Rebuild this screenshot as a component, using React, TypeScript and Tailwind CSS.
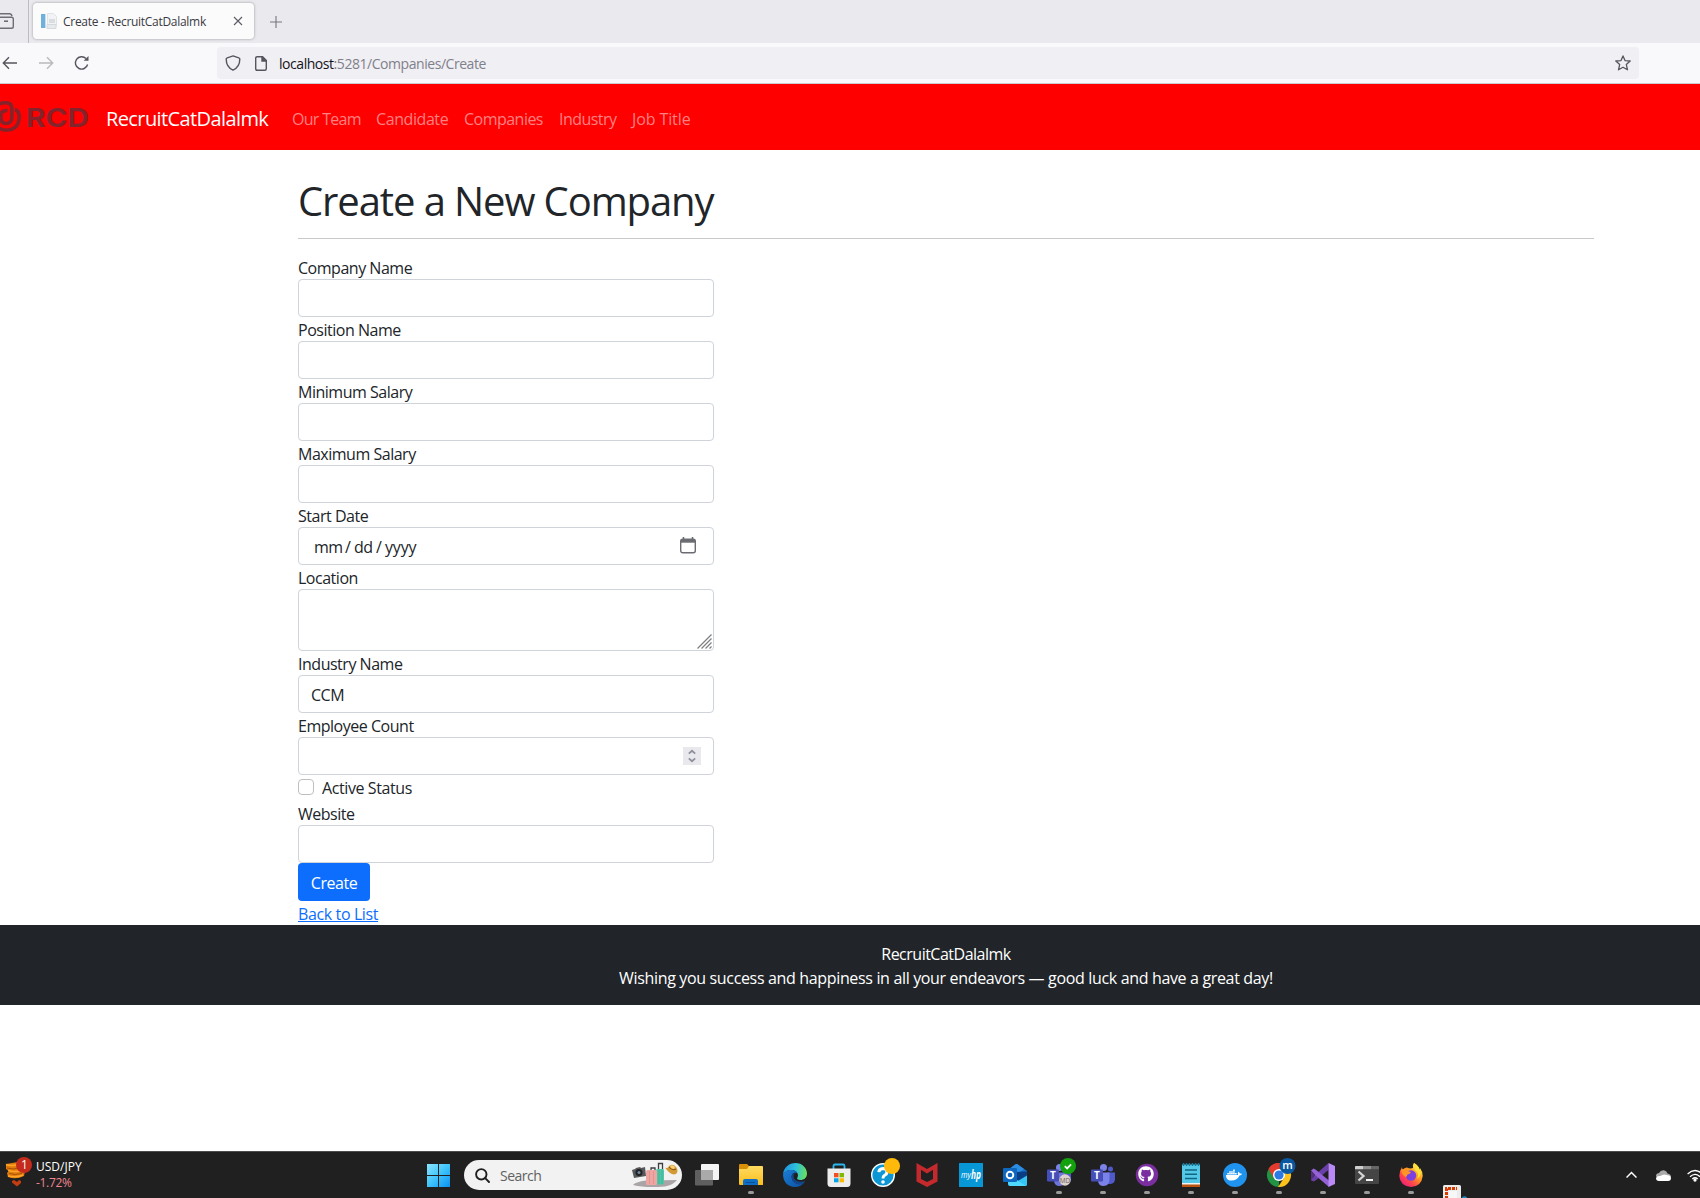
import type { ReactNode } from 'react';
import { FaDocker, FaGithub } from 'react-icons/fa';

/* ---------- Browser chrome ---------- */

function TabStrip() {
  return (
    <div className="flex h-[43px] bg-[#eae9ed]">
      <div className="flex w-[29px] shrink-0 items-center border-r border-[#bdbcc2]">
        <svg width="14" height="18" viewBox="0 0 14 18" fill="none" stroke="#6f6e76" strokeWidth="1.4" className="mb-px">
          <path d="M-2 1.7H9.5Q11.5 1.7 12 4.2M-3 5.2H11.5Q13.3 5.2 13.3 7V14.5Q13.3 16.3 11.5 16.3H-3" />
          <path d="M4 9.2H8" strokeWidth="1.6" />
        </svg>
      </div>
      <div className="ml-1 mt-[3px] flex h-9 w-[221px] items-center rounded bg-[#fbfbfc] pl-2 shadow-[0_0_3px_rgba(0,0,0,0.35)]">
        <svg width="16" height="17" viewBox="0 0 16 17" className="shrink-0">
          <rect x="0" y="1" width="4" height="14" fill="#6fb1dc" />
          <rect x="4" y="1" width="1" height="14" fill="#c6dfef" />
          <path d="M6.500.5h6l3 3v9h-9z" fill="#f1f3f5" stroke="#dfe3e6" />
          <path d="M8 7h6M8 9h6M7 12h8" stroke="#c3c8cc" />
          <path d="M6 11.500h9v4H6z" fill="#e7eaec" stroke="#d5d9dc" />
        </svg>
        <span className="ml-1.5 flex-1 whitespace-nowrap pt-0.5 text-xs tracking-[-0.29px] text-[#3a3a42]">Create - RecruitCatDalalmk</span>
        <svg width="10" height="10" viewBox="0 0 10 10" stroke="#5b5b66" strokeWidth="1.1" className="mr-[11px]">
          <path d="M1 1l8 8M9 1l-8 8" />
        </svg>
      </div>
      <svg width="12" height="12" viewBox="0 0 12 12" stroke="#77767e" strokeWidth="1.1" className="ml-4 mt-4">
        <path d="M6 0v12M0 6h12" />
      </svg>
    </div>
  );
}

function Toolbar() {
  return (
    <div className="flex h-[41px] items-center border-b border-[#cccccf] bg-[#f9f9fb]">
      <svg width="16" height="14" viewBox="0 0 16 14" fill="none" stroke="#56555e" strokeWidth="1.4" className="ml-[2px] shrink-0">
        <path d="M15 7H1.500M7 1.200L1.300 7L7 12.800" />
      </svg>
      <svg width="16" height="14" viewBox="0 0 16 14" fill="none" stroke="#b9b9be" strokeWidth="1.4" className="ml-[20px] shrink-0">
        <path d="M1 7h13.500M9 1.200L14.700 7L9 12.800" />
      </svg>
      <svg width="16" height="16" viewBox="0 0 16 16" fill="none" stroke="#56555e" strokeWidth="1.4" className="ml-5 shrink-0">
        <path d="M13.600 9.500A6.200 6.200 0 1 1 12 3.500" />
        <path d="M14.500 1v4.800H9.700z" fill="#56555e" stroke="none" />
      </svg>
      <div className="ml-[127px] flex h-8 w-[1422px] items-center rounded bg-[#f0eff4] pl-2">
        <svg width="16" height="16" viewBox="0 0 16 16" fill="none" stroke="#56555e" strokeWidth="1.4" className="mb-px shrink-0">
          <path d="M8 .9l5.800 2c.7.2 1 .5 1 1.200C14.800 9 13 13 8 15.200C3 13 1.200 9 1.200 4.100c0-.7.300-1 1-1.200z" />
        </svg>
        <svg width="12" height="15" viewBox="0 0 12 15" fill="none" stroke="#56555e" strokeWidth="1.4" className="ml-[14px] shrink-0">
          <path d="M2.200.7h5.300l3.800 3.800v8.300q0 1.500-1.500 1.500H2.200Q.7 14.300.7 12.800V2.200Q.7.7 2.200.7z" />
          <path d="M7 .5v4.500h4.500z" fill="#56555e" />
        </svg>
        <span className="ml-3 flex-1 whitespace-nowrap pt-0.5 text-sm tracking-[-0.45px] text-[#80808a]">
          <span className="text-[#15141a]">localhost</span>:5281/Companies/Create
        </span>
        <svg width="16" height="16" viewBox="0 0 16 16" fill="none" stroke="#56555e" strokeWidth="1.300" strokeLinejoin="round" className="mr-2">
          <path d="M8 .9l2 4.700 5.200.4-3.900 3.400 1.200 5.400L8 12.200l-4.500 2.600 1.200-5.400L.8 6l5.200-.4z" />
        </svg>
      </div>
    </div>
  );
}

/* ---------- Web page ---------- */

function Logo() {
  return (
    <svg width="90" height="34" viewBox="0 0 90 34" className="shrink-0">
      <g fill="none" stroke="#85222a" strokeWidth="3.600">
        <path d="M-2 4.500Q3 2 8 3Q11.800 3.800 11.800 8V17.500Q11.500 23.500 6 23.500Q1 23.500 1 18V15Q1 10.500 7.500 10.500" />
        <path d="M14.800 9.500Q19.200 10.500 19.200 17.500Q18.500 30 6 30.200Q1 30.200-3 27" />
      </g>
      <text x="26" y="26.500" fontFamily="Inter" fontWeight="700" fontSize="25" textLength="63" lengthAdjust="spacingAndGlyphs" fill="#85222a">RCD</text>
    </svg>
  );
}

function Navbar() {
  return (
    <nav className="flex h-[66px] items-center bg-[#ff0000] text-[#ff8080]">
      <Logo />
      <span className="ml-4 w-[179px] whitespace-nowrap pt-[3px] text-xl tracking-[-0.6px] text-white">RecruitCatDalalmk</span>
      <div className="ml-[7px] flex gap-4 whitespace-nowrap pt-[3px]">
        <a className="w-[68px] tracking-[-0.7px]">Our Team</a>
        <a className="w-[72px] tracking-[-0.42px]">Candidate</a>
        <a className="w-[79px] tracking-[-0.52px]">Companies</a>
        <a className="w-[57px] tracking-[-0.55px]">Industry</a>
        <a className="tracking-[-0.1px]">Job Title</a>
      </div>
    </nav>
  );
}

function Box({ tall, children }: { tall?: boolean; children?: ReactNode }) {
  return (
    <div className={`relative flex w-[416px] rounded border border-[#ced4da] bg-white ${tall ? 'h-[62px]' : 'h-[38px]'}`}>
      {children}
    </div>
  );
}

function Field({ label, tall, children }: { label: string; tall?: boolean; children?: ReactNode }) {
  return (
    <div>
      <div className="h-6 pt-px leading-6">{label}</div>
      <Box tall={tall}>{children}</Box>
    </div>
  );
}

function CompanyForm() {
  return (
    <main className="ml-[298px] w-[1296px] pt-8 tracking-[-0.48px] text-[#212529]">
      <h1 className="mb-[13px] mt-[-5px] h-12 text-[40px] leading-[48px] tracking-[-1.1px]">Create a New Company</h1>
      <hr className="mb-4 border-[#c8c9ca]" />
      <Field label="Company Name" />
      <Field label="Position Name" />
      <Field label="Minimum Salary" />
      <Field label="Maximum Salary" />
      <Field label="Start Date">
        <div className="flex flex-1 items-start justify-between pl-[15px] pr-[17px]">
          <span className="flex pt-[7px] leading-6">
            <span className="w-[31px]">mm</span>
            <span className="w-[9px]">/</span>
            <span className="w-[22px]">dd</span>
            <span className="w-[9px]">/</span>
            <span className="tracking-[-0.2px]">yyyy</span>
          </span>
          <svg width="16" height="17" viewBox="0 0 16 17" className="mt-[9px]">
            <path d="M3.500 0v3M12.500 0v3" stroke="#6b6c72" strokeWidth="1.600" />
            <rect x=".7" y="2.200" width="14.600" height="13.600" rx="2" fill="none" stroke="#6b6c72" strokeWidth="1.400" />
            <path d="M1 2.500h14v3.200H1z" fill="#6b6c72" />
          </svg>
        </div>
      </Field>
      <Field label="Location" tall>
        <svg width="15" height="15" viewBox="0 0 15 15" stroke="#7d7d7d" strokeWidth="1.200" className="absolute bottom-[1px] right-[1px]">
          <path d="M.5 14.500l14-14M4.500 14.500l10-10M8.500 14.500l6-6M12.500 14.500l2-2" />
        </svg>
      </Field>
      <Field label="Industry Name">
        <span className="pl-3 pt-[7px] leading-6 tracking-[-0.5px]">CCM</span>
      </Field>
      <Field label="Employee Count">
        <svg width="18" height="18" viewBox="0 0 18 18" fill="none" stroke="#8f8f9d" strokeWidth="1.800" className="ml-auto mr-3 mt-[9px] bg-[#e9e9ed]">
          <path d="M5.800 6.600L9 3.800l3.200 2.800M5.800 11.400L9 14.200l3.200-2.800" />
        </svg>
      </Field>
      <div className="flex h-[26px]">
        <span className="mt-1 size-4 rounded border border-[#bfbfbf]" />
        <span className="ml-2 pt-px leading-6 tracking-[-0.4px]">Active Status</span>
      </div>
      <Field label="Website" />
      <button className="flex h-[38px] w-[72px] justify-center rounded bg-[#0d6efd] pt-2 leading-6 text-white">Create</button>
      <a className="flex h-6 pt-px leading-6 tracking-[-0.38px] text-[#0d6efd] underline">Back to List</a>
    </main>
  );
}

/* ---------- Taskbar ---------- */

function TaskIcon({ running, children }: { running?: boolean; children: ReactNode }) {
  return (
    <div className="flex w-11 shrink-0 flex-col items-center">
      <svg width="24" height="24" viewBox="0 0 24 24" className="mt-[11px] overflow-visible">
        {children}
      </svg>
      {running && <span className="mt-1 h-[3px] w-1.5 rounded-full bg-[#9a9a9a]" />}
    </div>
  );
}

function TeamsShape({ muted }: { muted?: boolean }) {
  return (
    <>
      <circle cx="12.500" cy="4.500" r="3.500" fill="#7b83eb" />
      <circle cx="19.500" cy="6" r="2.500" fill="#5059c9" />
      <path d="M16 9.500h8v7q-.5 4-4.500 4.500H16z" fill="#5059c9" />
      <path d="M7 9.500h11.500v7q0 6-6 6.500q-5 0-5.500-5z" fill={muted ? '#6d75d8' : '#7b83eb'} />
      <rect x="0" y="6.500" width="12" height="12" rx="1" fill="#464eb8" />
      <text x="6" y="16" fontSize="10" fontWeight="700" textAnchor="middle" fill="#fff">T</text>
    </>
  );
}

function Luggage() {
  return (
    <svg width="47" height="26" viewBox="0 0 47 26" className="shrink-0">
      <path d="M2 23Q4 20 15 18.500L46 18Q42 23 34 24.500Q14 26 2 23z" fill="#aaa4a6" />
      <path d="M1 8l3-1 1-1 4-1 1 1 4-1 1 9-12 2z" fill="#57585b" />
      <circle cx="8" cy="10.500" r="3.500" fill="#222" />
      <circle cx="8" cy="10.500" r="1.500" fill="#6d87a0" />
      <path d="M27.500 8V1.500h4V8M20 11V6h4v5" fill="none" stroke="#3c3f42" strokeWidth="1.300" />
      <rect x="25" y="7" width="8" height="15.500" rx="1.500" fill="#53c6a8" />
      <path d="M28 8v14M31 8v14" stroke="#43b295" />
      <rect x="15" y="8" width="11" height="15" rx="1.500" fill="#efa5a2" />
      <path d="M18.500 9v13M22.500 9v13" stroke="#e39390" />
      <path d="M34 5.500Q37 7 38 4Q42 1 45 5Q48 9 45 12Q40 14 34 5.500z" fill="#d39a35" />
      <path d="M38 5Q41 9 45 7" fill="none" stroke="#8c5a15" strokeWidth="1.200" />
      <path d="M39 4Q42 2 44 5L43 7Q40 7 39 4z" fill="#f6cf77" />
    </svg>
  );
}

function Taskbar() {
  return (
    <div className="flex h-[47px] overflow-hidden border-t border-[#4c4c4c] bg-[#202020]">
      <div className="flex w-[427px] shrink-0 pt-[4px]">
        <svg width="34" height="34" viewBox="0 0 34 34" className="shrink-0">
          <path d="M6 8l12-2 2 3 5 6-1 5q-8 4-16 1l-1-4 2-2-3-2z" fill="#e07c0c" />
          <path d="M6 8.500q6 2 12 0M8 14.500q7 2 14 0M8 20q8 2 15-1" fill="none" stroke="#ffa52a" strokeWidth="1.600" />
          <path d="M7 12q6 2 12 0M9 17.500q6 2 13 0" fill="none" stroke="#a95106" />
          <path d="M12 25l2-1 3 2 2-2 2 1v2l-4 3.500-5-4z" fill="#c53c13" />
          <circle cx="24" cy="9" r="8" fill="#c42b1c" />
          <text x="24.500" y="13.300" fontSize="12" textAnchor="middle" fill="#fff">1</text>
        </svg>
        <div className="ml-0.5 pt-[3px] text-xs leading-4">
          <div className="tracking-[0px] text-white">USD/JPY</div>
          <div className="tracking-[-0.3px] text-[#f0868f]">-1.72%</div>
        </div>
      </div>
      <svg width="23" height="23" viewBox="0 0 23 23" className="mt-3 shrink-0">
        <defs>
          <linearGradient id="win" x1="0" y1="0" x2="23" y2="23" gradientUnits="userSpaceOnUse">
            <stop stopColor="#8be4ff" />
            <stop offset=".5" stopColor="#3fc4fb" />
            <stop offset="1" stopColor="#0a92f4" />
          </linearGradient>
        </defs>
        <path d="M0 0h11v11H0zM12 0h11v11H12zM0 12h11v11H0zM12 12h11v11H12z" fill="url(#win)" />
      </svg>
      <div className="ml-[14px] mt-2 flex h-[30px] w-[218px] shrink-0 items-center rounded-full bg-[#f2f2f2] pl-[11px]">
        <svg width="15" height="15" viewBox="0 0 15 15" fill="none" stroke="#1f1f1f" strokeWidth="1.900" strokeLinecap="round">
          <circle cx="6.300" cy="6.300" r="5.200" />
          <path d="M10.200 10.200l3.800 3.800" />
        </svg>
        <span className="ml-[10px] flex-1 pt-px text-sm tracking-[-0.5px] text-[#606060]">Search</span>
        <div className="mr-1"><Luggage /></div>
      </div>
      <div className="ml-[3px] flex shrink-0">
        <TaskIcon>
          <rect x="6" y="1" width="18" height="16" rx="1" fill="#f4f4f4" />
          <rect x="0" y="7" width="18" height="15.500" rx="1" fill="#6b6b6b" fillOpacity=".85" />
          <path d="M6 7h12v10H6z" fill="#aaa" />
        </TaskIcon>
        <TaskIcon running>
          <path d="M0 2q0-1 1-1h7l2 2v4H0z" fill="#d98f06" />
          <path d="M0 6h8l2-3h13q1 0 1 1v17.500q0 .5-1 .5H1q-1 0-1-1z" fill="url(#folder)" />
          <defs><linearGradient id="folder" x2="0" y2="1"><stop stopColor="#ffdc60" /><stop offset="1" stopColor="#f9bd1f" /></linearGradient></defs>
          <path d="M4 22v-4q0-2 2-2h11q2 0 2 2v4z" fill="#0f6fc4" />
          <path d="M7 19.500h9" stroke="#084f94" />
        </TaskIcon>
        <TaskIcon>
          <defs>
            <linearGradient id="edgeTop" x1="0" y1="6" x2="24" y2="10" gradientUnits="userSpaceOnUse"><stop stopColor="#1f8fe0" /><stop offset=".5" stopColor="#2cc0dd" /><stop offset="1" stopColor="#6be05a" /></linearGradient>
            <linearGradient id="edgeLow" x2="1" y2="1"><stop stopColor="#1b7fd6" /><stop offset="1" stopColor="#0c4fa0" /></linearGradient>
          </defs>
          <path d="M0 11.500C.5 4.500 6 0 12.500 0C19 0 24 5 24 10.500C24 15 20.500 17 17.500 17C15 17 13.800 16 14.200 15C16 12.500 15 8 9.500 7C5 6.500 1.500 8.500 0 11.500z" fill="url(#edgeTop)" />
          <path d="M0 12C1 8.500 5 6.500 9.500 7Q13 7.500 14.500 10Q9 8.500 8.500 14Q9 20.500 17 21Q20 20.500 22 18.500Q18 24 12 24Q1 23.500 0 12z" fill="url(#edgeLow)" />
          <path d="M8.500 13.500Q9 10 12 9.500Q9.800 12 11 15.500Q14 20 22.200 18.300Q20 21.500 16.500 21.500Q9 20.500 8.500 13.500z" fill="#12468f" />
        </TaskIcon>
        <TaskIcon>
          <path d="M6.500 6V3q0-1.500 1.500-1.500h8q1.500 0 1.500 1.500v3" fill="none" stroke="#2ab7ef" strokeWidth="1.800" />
          <path d="M.5 5.500h23v15q0 3.500-3.500 3.500H4Q.5 24 .5 20.500z" fill="#ededed" />
          <path d="M7 10h4.500v4.300H7z" fill="#f25022" /><path d="M12.500 10H17v4.300h-4.500z" fill="#7fba00" />
          <path d="M7 15.300h4.500v4H7z" fill="#00a4ef" /><path d="M12.500 15.300H17v4h-4.500z" fill="#ffb900" />
        </TaskIcon>
        <TaskIcon>
          <circle cx="12" cy="12" r="11.300" fill="#0d96d4" stroke="#fff" strokeWidth="1.400" />
          <path d="M7.800 9.200Q8 5.700 12 5.500Q16 5.700 16 9Q16 11 13.700 12.300Q12 13.300 12 15.500" fill="none" stroke="#fff" strokeWidth="3" />
          <circle cx="12" cy="19" r="1.800" fill="#fff" />
          <circle cx="21" cy="3" r="8" fill="#ffb90a" />
        </TaskIcon>
        <TaskIcon>
          <path d="M1.500 0L12 6L22.500 0V18.500L12 24L1.500 18.500zM6 6.800V16L12 19L18 16V6.800L12 10.500z" fill="#c42a2d" fillRule="evenodd" />
        </TaskIcon>
        <TaskIcon>
          <rect width="24" height="24" rx=".5" fill="#0796d6" />
          <text x="2" y="15" fontSize="9" fontStyle="italic" fill="#fff" textLength="10" lengthAdjust="spacingAndGlyphs">my</text>
          <text x="12" y="15.500" fontSize="12" fontStyle="italic" fontWeight="700" fill="#fff" textLength="10" lengthAdjust="spacingAndGlyphs">hp</text>
        </TaskIcon>
        <TaskIcon>
          <path d="M3 8.500L12.500 1.300Q13.500.7 14.500 1.300L24 8V14H3z" fill="#1572c8" />
          <path d="M5 7L12.500 1.300Q13.500.7 14.500 1.300L21 6L13 12z" fill="#2b8ce2" />
          <path d="M24 8L12 15.500V23H22.500Q24 23 24 21.500z" fill="#34c4f5" />
          <path d="M14 9L24 8.200V12.500L14 18.500z" fill="#0a3e84" />
          <path d="M5 18L14 17L23 23H7Q5 23 5 21z" fill="#50d9ff" />
          <rect x="0" y="5" width="14" height="14" rx="1" fill="#0f68c0" />
          <circle cx="7" cy="12" r="3.300" fill="none" stroke="#fff" strokeWidth="1.900" />
        </TaskIcon>
        <TaskIcon running>
          <TeamsShape muted />
          <circle cx="18" cy="17" r="5.700" fill="#dcd1cc" />
          <text x="18" y="19.500" fontSize="6.500" textAnchor="middle" fill="#6b5f5a">MD</text>
          <circle cx="21" cy="3" r="8" fill="#13a10e" />
          <path d="M17.800 3.200l2.300 2.200 4-4" fill="none" stroke="#fff" strokeWidth="1.800" />
        </TaskIcon>
        <TaskIcon running><TeamsShape /></TaskIcon>
        <TaskIcon running>
          <circle cx="12" cy="12" r="11.200" fill="#7a2ea0" />
          <FaGithub x="3" y="3" width="18" height="18" color="#fff" />
        </TaskIcon>
        <TaskIcon running>
          <path d="M3 21h18v3H3z" fill="#b8540f" />
          <path d="M3 19.500h18v2H3z" fill="#f3f3f3" />
          <path d="M3 1.500h18V20H3z" fill="#55c8e8" />
          <path d="M4.500 0v3M7.500 0v3M10.500 0v3M13.500 0v3M16.500 0v3M19.500 0v3" stroke="#157b9b" strokeWidth="1.400" />
          <path d="M6 7h12M6 11.300h12M6 15.500h12" stroke="#0f6683" strokeWidth="1.600" />
        </TaskIcon>
        <TaskIcon running>
          <circle cx="12" cy="12" r="12" fill="#2093ee" />
          <FaDocker x="3" y="4" width="19" height="15" color="#fff" />
        </TaskIcon>
        <TaskIcon running>
          <path d="M12 12L1.600 6A12 12 0 0 1 22.400 6z" fill="#e33b2e" />
          <path d="M12 12V24A12 12 0 0 1 1.600 6z" fill="#229342" />
          <path d="M12 12V6h10.400A12 12 0 0 1 11 24L17 15z" fill="#fcc31e" />
          <path d="M12 6H22.400A12 12 0 0 0 1.600 6L6.800 15z" fill="#e33b2e" />
          <circle cx="12" cy="12" r="6" fill="#fff" />
          <circle cx="12" cy="12" r="4.600" fill="#2c7be5" />
          <circle cx="20.500" cy="3" r="8" fill="#0a58a0" />
          <text x="20.500" y="6.200" fontSize="11" fontWeight="600" textAnchor="middle" fill="#fff">m</text>
        </TaskIcon>
        <TaskIcon running>
          <path d="M17.500 0V7L4.500 17.500L2.500 18.500L0 17.300L0 16.500L4 12z" fill="#6b3fa8" />
          <path d="M0 7.500L2.500 5.500L4.500 6.500L18 17.500V24L4 12z" fill="#9461d6" />
          <path d="M0 7.500L4 12L0 16.700z" fill="#52307c" />
          <path d="M17.500 0L24 3V21L17.500 24z" fill="#b98af5" />
        </TaskIcon>
        <TaskIcon running>
          <rect y="3" width="24" height="18" rx="1" fill="#454545" />
          <path d="M0 6.200V4q0-1 1-1h7v3.200z" fill="#cfcfcf" />
          <path d="M8 3h8v3.200H8z" fill="#8f8f8f" /><path d="M16 3h7q1 0 1 1v2.200h-8z" fill="#666" />
          <path d="M3.500 8.500L8.500 13L3.500 17.500" fill="none" stroke="#d4d4d4" strokeWidth="2.300" />
          <path d="M11 17h7" stroke="#f3f3f3" strokeWidth="2" />
        </TaskIcon>
        <TaskIcon running>
          <defs>
            <linearGradient id="fox" x1="20" y1="2" x2="4" y2="22" gradientUnits="userSpaceOnUse"><stop stopColor="#fff04a" /><stop offset=".4" stopColor="#ff9a20" /><stop offset=".75" stopColor="#ff4150" /><stop offset="1" stopColor="#e8207b" /></linearGradient>
          </defs>
          <path d="M15 0Q20 3 20.500 6.500Q21 6 21 5Q24 9 23.700 13Q22.500 23.500 12 24Q1 23 .3 13Q.3 8 3 4Q3 6 4 6.500Q6 4.500 8 4.500Q11 6 14 5Q13 2 15 0z" fill="url(#fox)" />
          <circle cx="12" cy="12.500" r="5.200" fill="#7a40e0" />
          <path d="M2 7Q7 4 9 8L12 9Q11 11 8.500 11.500Q8 13.500 6.500 14Q3 12 2 7z" fill="#ff9427" />
          <path d="M15 0Q14 4 16 7Q21 10 18 16Q24 11 20.500 6.500Q20 3 15 0z" fill="#ffdf3c" />
        </TaskIcon>
      </div>
      <svg width="26" height="14" viewBox="0 0 26 14" className="ml-[10px] mt-[33px] shrink-0">
        <rect width="18" height="20" rx="1.500" fill="#ececec" />
        <path d="M3.500 14V3.500H14" fill="none" stroke="#d83b01" strokeWidth="3" strokeDasharray="3 1" />
        <path d="M6 6h8v8H6z" fill="#f7f7f7" />
        <circle cx="21.500" cy="14" r="2" fill="none" stroke="#1e8fd0" strokeWidth="1.500" />
      </svg>
      <div className="ml-auto flex w-[74px] shrink-0 overflow-hidden">
        <svg width="11" height="8" viewBox="0 0 11 8" fill="none" stroke="#fff" strokeWidth="1.500" className="mt-[19px] shrink-0">
          <path d="M.5 6.500l5-5 5 5" />
        </svg>
        <svg width="16" height="11" viewBox="0 0 16 11" className="ml-[18px] mt-[18px] shrink-0">
          <path d="M3 8Q.5 7 1 5Q2 3 4 3Q5.500 0 9 .3Q12 1 12.500 3.500Q16 4 16 7z" fill="#a9a9a9" />
          <path d="M1 8Q2 5.500 5 6L9 4.500L14 5.500Q16 6 16 8Q16 11 13 11H4Q1 11 1 8z" fill="#fff" />
        </svg>
        <svg width="16" height="13" viewBox="0 0 16 13" fill="none" stroke="#fff" strokeWidth="1.300" className="ml-4 mt-[17px] shrink-0">
          <path d="M.6 5Q8-2 15.400 5M3 7.700Q8 3 13 7.700M5.300 10Q8 7.500 10.700 10" />
          <circle cx="8" cy="11" r="1" fill="#fff" />
        </svg>
      </div>
    </div>
  );
}

export default function App() {
  return (
    <div className="flex h-[1198px] w-[1700px] flex-col overflow-hidden bg-white font-['Open_Sans',sans-serif] text-base">
      <TabStrip />
      <Toolbar />
      <Navbar />
      <CompanyForm />
      <footer className="h-20 bg-[#212529] pl-[298px] pr-[106px] pt-[17px] text-center leading-6 text-white">
        <div className="tracking-[-0.5px]">RecruitCatDalalmk</div>
        <div className="tracking-[-0.34px]">Wishing you success and happiness in all your endeavors — good luck and have a great day!</div>
      </footer>
      <div className="flex-1" />
      <Taskbar />
    </div>
  );
}
